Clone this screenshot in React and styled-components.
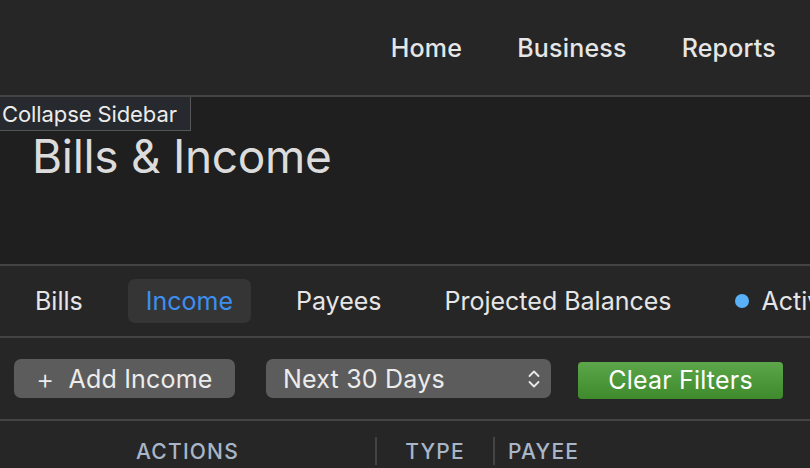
import styled, { createGlobalStyle } from "styled-components";

const GlobalStyle = createGlobalStyle`
  html, body {
    margin: 0;
    padding: 0;
    background: #1f1f1f;
    overflow: hidden;
  }
  body {
    font-family: "Inter", "Liberation Sans", sans-serif;
    -webkit-font-smoothing: antialiased;
  }
`;

const tabs = ["Bills", "Income", "Payees", "Projected Balances"];

const App = () => {
  return (
    <Page>
      <GlobalStyle />
      <TopBar>
        <NavItem>Home</NavItem>
        <NavItem>Business</NavItem>
        <NavItem>Reports</NavItem>
      </TopBar>
      <Header>
        <Tooltip>Collapse Sidebar</Tooltip>
        <Title>Bills &amp; Income</Title>
      </Header>
      <TabBar>
        {tabs.map((tab) => (
          <Tab key={tab} $active={tab === "Income"}>
            {tab}
          </Tab>
        ))}
        <Tab>
          <Dot />
          Active
        </Tab>
      </TabBar>
      <Toolbar>
        <GreyButton>
          <Plus>+</Plus>
          Add Income
        </GreyButton>
        <Select>
          Next 30 Days
          <svg width="14" height="22" viewBox="0 0 14 22">
            <path
              d="M2.5 8 L7 3.5 L11.5 8 M2.5 14 L7 18.5 L11.5 14"
              fill="none"
              stroke="#e8e8e8"
              strokeWidth="1.8"
              strokeLinecap="round"
              strokeLinejoin="round"
            />
          </svg>
        </Select>
        <GreenButton>Clear Filters</GreenButton>
      </Toolbar>
      <TableHead>
        <HeadCell $width={375} $center>
          ACTIONS
        </HeadCell>
        <HeadCell $width={118} $center $divided>
          TYPE
        </HeadCell>
        <HeadCell $width={200} $divided>
          PAYEE
        </HeadCell>
      </TableHead>
    </Page>
  );
};

const Page = styled.div`
  width: 810px;
  height: 468px;
  overflow: hidden;
  background: #1f1f1f;
`;

const TopBar = styled.div`
  display: flex;
  justify-content: flex-end;
  align-items: center;
  gap: 55px;
  height: 97px;
  padding-right: 34px;
  background: #262626;
  border-bottom: 2px solid #444444;
  box-sizing: border-box;
`;

const NavItem = styled.div`
  color: #e6e6e6;
  font-size: 25px;
  font-weight: 500;
  letter-spacing: 0.2px;
`;

const Header = styled.div`
  position: relative;
  height: 169px;
  padding: 31px 0 0 32px;
  box-sizing: border-box;
  background: #1f1f1f;
  border-bottom: 2px solid #444444;
`;

const Tooltip = styled.div`
  position: absolute;
  left: -1px;
  top: 0;
  height: 34px;
  padding: 0 13px 0 2px;
  box-sizing: border-box;
  display: flex;
  align-items: center;
  background: #26292d;
  border: 1px solid #565656;
  border-top: none;
  color: #ececec;
  font-size: 22px;
  letter-spacing: -0.1px;
`;

const Title = styled.h1`
  margin: 0;
  color: #dcdcdc;
  font-size: 46px;
  font-weight: 400;
  letter-spacing: -0.3px;
`;

const TabBar = styled.div`
  display: flex;
  align-items: center;
  gap: 27px;
  height: 72px;
  padding-left: 17px;
  background: #262626;
  border-bottom: 2px solid #444444;
  box-sizing: border-box;
  white-space: nowrap;
`;

const Tab = styled.div`
  display: flex;
  align-items: center;
  gap: 13px;
  height: 44px;
  padding: 0 18px;
  border-radius: 7px;
  background: ${(p) => (p.$active ? "#353535" : "transparent")};
  color: ${(p) => (p.$active ? "#3c8ff0" : "#e6e6e6")};
  font-size: 25px;
`;

const Dot = styled.span`
  width: 14px;
  height: 14px;
  border-radius: 50%;
  background: #5ab0f6;
`;

const Toolbar = styled.div`
  display: flex;
  align-items: center;
  gap: 31px;
  height: 83px;
  padding-left: 14px;
  background: #262626;
  border-bottom: 2px solid #444444;
  box-sizing: border-box;
`;

const GreyButton = styled.div`
  display: flex;
  align-items: center;
  gap: 14px;
  width: 221px;
  height: 39px;
  padding-left: 22px;
  box-sizing: border-box;
  background: #5c5c5c;
  border-radius: 7px;
  color: #ececec;
  font-size: 25px;
  letter-spacing: 0.2px;
`;

const Plus = styled.span`
  font-size: 28px;
  font-weight: 300;
  line-height: 1;
`;

const Select = styled(GreyButton)`
  justify-content: space-between;
  width: 285px;
  padding: 0 10px 0 17px;
`;

const GreenButton = styled.div`
  display: flex;
  align-items: center;
  justify-content: center;
  width: 205px;
  height: 37px;
  margin: 3px 0 0 -4px;
  border-radius: 4px;
  background: linear-gradient(#5da64b, #3e8a2c);
  color: #ffffff;
  font-size: 25px;
  letter-spacing: 0.2px;
`;

const TableHead = styled.div`
  display: flex;
  align-items: flex-start;
  height: 48px;
  padding-top: 16px;
  box-sizing: border-box;
  background: #262626;
`;

const HeadCell = styled.div`
  display: flex;
  align-items: center;
  justify-content: ${(p) => (p.$center ? "center" : "flex-start")};
  width: ${(p) => p.$width}px;
  height: 28px;
  padding-left: ${(p) => (p.$center ? "0" : "13px")};
  box-sizing: border-box;
  border-left: ${(p) => (p.$divided ? "2px solid #444444" : "none")};
  color: #a9b6c8;
  font-size: 21px;
  font-weight: 500;
  letter-spacing: 1.2px;
`;

export default App;
